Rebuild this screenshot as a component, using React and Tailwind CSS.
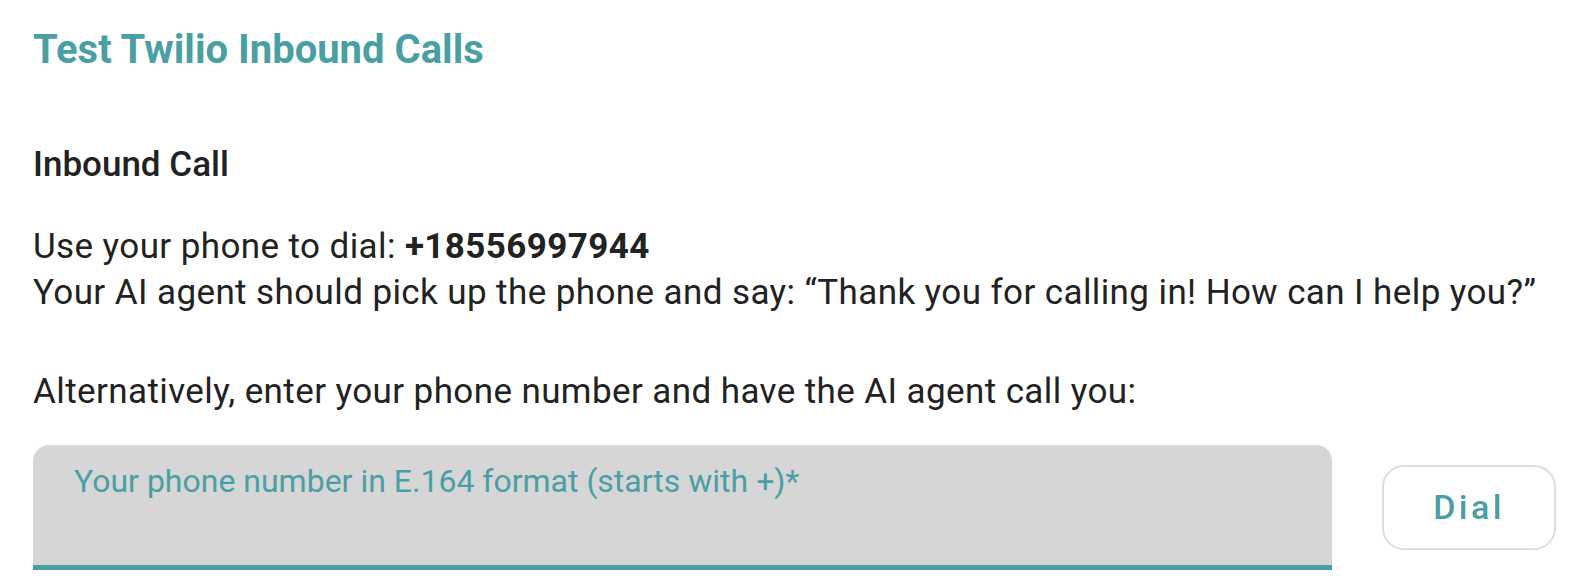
export default function App() {
  return (
    <div className="w-[1582px] h-[586px] bg-white overflow-hidden pl-[33px] pr-[20px] pt-[26px]" style={{ fontFamily: 'Roboto, "Noto Sans", sans-serif' }}>
      <h1 className="text-[40px] leading-[48px] font-bold text-[#4a9fa5]">Test Twilio Inbound Calls</h1>
      <h2 className="mt-[71px] text-[35px] leading-[40px] font-medium text-[#222]">Inbound Call</h2>
      <div className="mt-[39px] text-[35px] leading-[46px] text-[#222] whitespace-nowrap tracking-[0.4px]">
        <p>
          Use your phone to dial: <span className="font-bold">+18556997944</span>
        </p>
        <p>Your AI agent should pick up the phone and say: “Thank you for calling in! How can I help you?”</p>
        <p className="mt-[53px]">Alternatively, enter your phone number and have the AI agent call you:</p>
      </div>
      <div className="mt-[30px] flex items-start">
        <div className="w-[1299px] h-[125px] shrink-0 bg-[#d6d6d6] rounded-t-[16px] border-b-[5px] border-[#4a9fa5] px-[41px] pt-[16px]">
          <span className="text-[32px] leading-[40px] text-[#4a9fa5] whitespace-nowrap">Your phone number in E.164 format (starts with +)*</span>
        </div>
        <button className="ml-[50px] mt-[20px] w-[174px] h-[85px] shrink-0 rounded-[22px] border-2 border-[#dedede] bg-white text-[34px] font-medium tracking-[0.1em] text-[#4a9fa5]">
          Dial
        </button>
      </div>
    </div>
  );
}
